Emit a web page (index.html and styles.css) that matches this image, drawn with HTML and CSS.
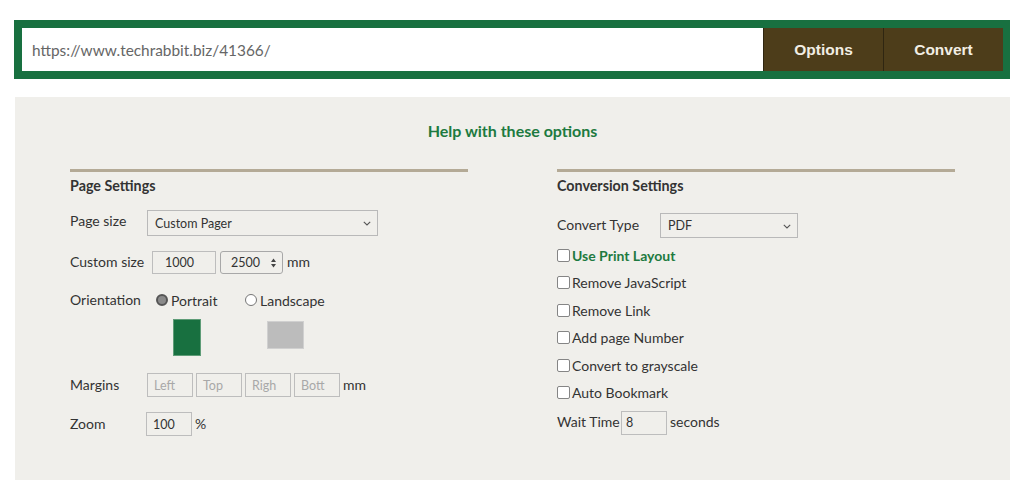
FILE: index.html
```html
<!DOCTYPE html>
<html lang="en">
<head>
<meta charset="utf-8">
<title>Converter Options</title>
<link rel="stylesheet" href="styles.css">
</head>
<body>
<form class="urlbar">
  <input class="url" type="text" value="https://www.techrabbit.biz/41366/">
  <button type="button" class="btn">Options</button>
  <button type="button" class="btn btn-last">Convert</button>
</form>

<div class="panel">
  <p class="help">Help with these options</p>
  <div class="cols">
    <section class="col">
      <div class="rule"></div>
      <h2 class="col-title">Page Settings</h2>

      <div class="row row-size">
        <span class="lbl lbl-77 lbl-up">Page size</span>
        <div class="select sel-page">
          <span class="sel-text">Custom Pager</span>
          <svg class="chev" width="8" height="5" viewBox="0 0 8 5"><path d="M0.8 0.8l3.2 3.2 3.2-3.2" fill="none" stroke="#555" stroke-width="1.1"/></svg>
        </div>
      </div>

      <div class="row row-custom">
        <span class="lbl lbl-82">Custom size</span>
        <div class="field f-64"><span class="val">1000</span></div>
        <div class="field f-63 field-spin"><span class="val">2500</span>
          <svg class="spin" width="7" height="12" viewBox="0 0 7 12"><path d="M3.5 1.5L6 5H1Z M3.5 10.5L6 7H1Z" fill="#444"/></svg>
        </div>
        <span class="unit">mm</span>
      </div>

      <div class="row row-orient">
        <span class="lbl lbl-86">Orientation</span>
        <label class="opt opt-first"><span class="radio radio-on"></span>Portrait</label>
        <label class="opt"><span class="radio"></span>Landscape</label>
      </div>

      <div class="row row-shapes">
        <div class="shape shape-portrait"></div>
        <div class="shape shape-landscape"></div>
      </div>

      <div class="row row-margins">
        <span class="lbl lbl-77">Margins</span>
        <div class="margins">
          <div class="field f-46"><span class="ph">Left</span></div>
          <div class="field f-46"><span class="ph">Top</span></div>
          <div class="field f-46"><span class="ph">Righ</span></div>
          <div class="field f-46"><span class="ph">Bott</span></div>
        </div>
        <span class="unit unit-3">mm</span>
      </div>

      <div class="row row-zoom">
        <span class="lbl lbl-76">Zoom</span>
        <div class="field f-46"><span class="val">100</span></div>
        <span class="unit unit-3">%</span>
      </div>
    </section>

    <section class="col">
      <div class="rule"></div>
      <h2 class="col-title">Conversion Settings</h2>

      <div class="row row-type">
        <span class="lbl lbl-103">Convert Type</span>
        <div class="select sel-type">
          <span class="sel-text">PDF</span>
          <svg class="chev" width="8" height="5" viewBox="0 0 8 5"><path d="M0.8 0.8l3.2 3.2 3.2-3.2" fill="none" stroke="#555" stroke-width="1.1"/></svg>
        </div>
      </div>

      <div class="checks">
        <label class="check check-green"><span class="box"></span>Use Print Layout</label>
        <label class="check"><span class="box"></span>Remove JavaScript</label>
        <label class="check"><span class="box"></span>Remove Link</label>
        <label class="check"><span class="box"></span>Add page Number</label>
        <label class="check"><span class="box"></span>Convert to grayscale</label>
        <label class="check"><span class="box"></span>Auto Bookmark</label>
      </div>

      <div class="row row-wait">
        <span class="lbl lbl-64">Wait Time</span>
        <div class="field f-46 field-left"><span class="val">8</span></div>
        <span class="unit unit-3">seconds</span>
      </div>
    </section>
  </div>
</div>
</body>
</html>
```

FILE: styles.css
```css
* { box-sizing: border-box; }

html, body {
  margin: 0;
  padding: 0;
  background: #ffffff;
  font-family: Lato, "Open Sans", sans-serif;
  color: #333333;
}

body { height: 480px; overflow: hidden; }

/* ---------- URL bar ---------- */
.urlbar {
  display: flex;
  width: 996px;
  height: 59px;
  margin: 20px 0 0 14px;
  border: 8px solid #187040;
  border-right-width: 7px;
  background: #187040;
}

.url {
  flex: 1;
  min-width: 0;
  height: 43px;
  border: 0;
  margin: 0;
  padding: 0 0 0 10px;
  background: #ffffff;
  font-family: Lato, sans-serif;
  font-size: 15.4px;
  color: #666666;
  outline: none;
}

.btn {
  width: 120px;
  height: 43px;
  margin: 0;
  padding: 0;
  border: 0;
  border-left: 1px solid #2f2611;
  background: #4d3d1a;
  color: #f2eee4;
  font-family: "Liberation Sans", Arial, sans-serif;
  font-weight: bold;
  font-size: 15.5px;
}

/* ---------- Panel ---------- */
.panel {
  width: 995px;
  height: 400px;
  margin: 18px 0 0 15px;
  padding: 24px 55px 0;
  background: #f0efeb;
}

.help {
  margin: 0;
  height: 20px;
  line-height: 20px;
  text-align: center;
  font-weight: bold;
  font-size: 16px;
  color: #1d7a40;
}

.cols {
  display: grid;
  grid-template-columns: 398px 398px;
  column-gap: 89px;
  margin-top: 28px;
}

.rule {
  height: 3px;
  background: #b4aa96;
}

.col-title {
  margin: 4px 0 0;
  height: 20px;
  line-height: 20px;
  font-size: 14.3px;
  font-weight: bold;
  color: #333333;
}

.row {
  display: flex;
  align-items: center;
  font-size: 14px;
}

.lbl { flex: none; white-space: nowrap; padding-bottom: 2px; }
.lbl-up { padding-bottom: 5px; }
.lbl-64 { width: 64px; }
.lbl-76 { width: 76px; }
.lbl-77 { width: 77px; }
.lbl-82 { width: 82px; }
.lbl-86 { width: 86px; }
.lbl-103 { width: 103px; }

/* select */
.select {
  position: relative;
  display: flex;
  align-items: center;
  height: 100%;
  border: 1px solid #b9b9b9;
  background: #f0efeb;
  padding-left: 7px;
  font-size: 12.5px;
  color: #333333;
}

.chev {
  position: absolute;
  right: 6px;
  top: 50%;
  margin-top: -2px;
}

.sel-page { width: 231px; }
.sel-type { width: 138px; }

/* text fields */
.field {
  position: relative;
  display: flex;
  align-items: center;
  height: 100%;
  border: 1px solid #bdbdbd;
  background: #f0efeb;
  font-size: 12.5px;
  color: #333333;
  padding-left: 6px;
}

.f-46 { width: 46px; }
.f-63 { width: 63px; }
.f-64 { width: 64px; padding-left: 12px; }

.field-spin {
  border-color: #a8a8a8;
  border-radius: 3px;
  padding-left: 10px;
}

.field-left { padding-left: 4px; }

.spin {
  position: absolute;
  right: 5px;
  top: 50%;
  margin-top: -6px;
}

.ph { color: #a8a8a8; }

.unit { margin-left: 4px; padding-bottom: 2px; }
.unit-3 { margin-left: 3px; }

.margins {
  display: flex;
  gap: 3px;
  height: 100%;
}

/* rows, left column */
.row-size { margin-top: 14px; height: 26px; }
.row-custom { margin-top: 15px; height: 23px; }
.row-custom .f-63 { margin-left: 4px; }
.row-orient { margin-top: 16px; height: 20px; }
.row-shapes { margin-top: 9px; height: 37px; align-items: flex-start; padding-left: 103px; }
.row-margins { margin-top: 17px; height: 24px; }
.row-zoom { margin-top: 15px; height: 24px; }

.opt {
  display: flex;
  align-items: center;
}

.opt-first { width: 89px; }

.radio {
  width: 12px;
  height: 12px;
  margin-right: 3px;
  border: 1px solid #767676;
  border-radius: 50%;
  background: #ffffff;
}

.radio-on {
  border: 2px solid #555555;
  background: #8a8a8a;
}

.shape { flex: none; }

.shape-portrait {
  width: 28px;
  height: 37px;
  background: #187040;
  border: 1px solid #5e9c77;
}

.shape-landscape {
  width: 37px;
  height: 28px;
  margin: 2px 0 0 66px;
  background: #bcbcbc;
  border: 1px solid #d0d0d0;
}

/* right column */
.row-type { margin-top: 17px; height: 25px; }

.checks {
  display: flex;
  flex-direction: column;
  gap: 7.5px;
  margin-top: 7px;
}

.check {
  display: flex;
  align-items: center;
  height: 20px;
  font-size: 14px;
}

.check-green {
  color: #1d7a40;
  font-weight: bold;
}

.box {
  flex: none;
  width: 13px;
  height: 13px;
  margin-right: 2px;
  border: 1px solid #858585;
  border-radius: 2px;
  background: #ffffff;
}

.row-wait { margin-top: 8px; height: 24px; }
```
